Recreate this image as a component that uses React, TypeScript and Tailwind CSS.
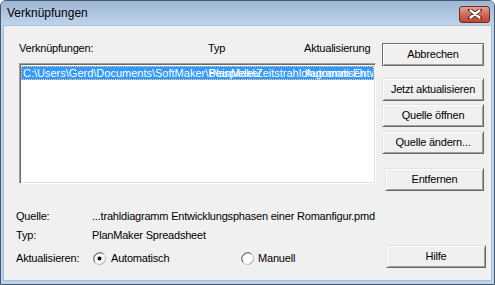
import React from 'react';

const font = { fontFamily: '"Liberation Sans", Arial, sans-serif' };

function WinButton({ label, className = '', isDefault = false }: { label: string; className?: string; isDefault?: boolean }) {
  return (
    <div
      className={`h-[23px] flex items-center justify-center text-[11px] text-black bg-[#f0f0f0] border ${
        isDefault ? 'border-[#6e6e6e]' : 'border-t-[#e3e3e3] border-l-[#e3e3e3] border-r-[#696969] border-b-[#696969]'
      } shadow-[inset_1px_1px_0_#ffffff,inset_-1px_-1px_0_#a0a0a0] ${className}`}
    >
      {label}
    </div>
  );
}

function Radio({ checked }: { checked?: boolean }) {
  return (
    <svg width="13" height="13" viewBox="0 0 13 13" className="shrink-0">
      <circle cx="6.5" cy="6.5" r="6" fill="#ffffff" stroke="#a0a0a0" />
      <path d="M2.3 10.7 A6 6 0 0 1 10.7 2.3" fill="none" stroke="#696969" />
      <path d="M10.7 2.3 A6 6 0 0 1 2.3 10.7" fill="none" stroke="#e3e3e3" />
      {checked && <circle cx="6.5" cy="6.5" r="2" fill="#000000" />}
    </svg>
  );
}

export default function App() {
  return (
    <div style={font} className="w-[495px] h-[285px] flex flex-col bg-[#bcd3ec] border border-[#46586e] rounded-t-[6px] overflow-hidden">
      {/* title bar */}
      <div className="h-[24px] shrink-0 flex items-center justify-between bg-gradient-to-b from-[#9db6d4] to-[#bfd4ec] pl-[6px] pr-[4px]">
        <span className="text-[12px] text-black">Verknüpfungen</span>
        <div className="w-[31px] h-[17px] mt-[2px] rounded-[3px] border border-[#6a2c24] bg-gradient-to-b from-[#e2a493] via-[#cf6a55] to-[#c2452f] flex items-center justify-center">
          <svg width="14" height="10" viewBox="0 0 14 10">
            <path d="M2 1 L12 9 M12 1 L2 9" stroke="#4a1a14" strokeWidth="4" strokeLinecap="round" />
            <path d="M2.5 1.5 L11.5 8.5 M11.5 1.5 L2.5 8.5" stroke="#ffffff" strokeWidth="2.4" strokeLinecap="round" />
          </svg>
        </div>
      </div>

      {/* client area */}
      <div className="flex-1 flex flex-col bg-[#f0f0f0] mx-[2px] mb-[3px] border border-[#a9bfd6] text-[11px] tracking-[-0.2px] text-black">
        {/* top section */}
        <div className="flex">
          <div className="pl-[15px] pt-[15px]">
            <div className="h-[14px] flex items-center">
              <span className="w-[189px]">Verknüpfungen:</span>
              <span className="w-[96px]">Typ</span>
              <span>Aktualisierung</span>
            </div>
            <div className="mt-[8px] w-[357px] h-[121px] bg-white border border-t-[#a0a0a0] border-l-[#a0a0a0] border-r-[#ffffff] border-b-[#ffffff] shadow-[inset_1px_1px_0_#696969,inset_-1px_-1px_0_#e3e3e3] p-[1px] pt-[2px]">
              <div className="relative h-[14px] bg-[#3399ff] text-white tracking-normal overflow-hidden whitespace-nowrap border border-dotted border-[#ffcc77] leading-[12px] pl-[1px]">
                <span>C:\Users\Gerd\Documents\SoftMaker\Beispiele\Zeitstrahldiagramm Entwicklungsphasen</span>
                <span className="absolute left-[187px] top-0">PlanMaker</span>
                <span className="absolute left-[283px] top-0">Automatisch</span>
              </div>
            </div>
          </div>
          <div className="ml-[6px] pt-[17px] flex flex-col items-end w-[102px]">
            <WinButton label="Abbrechen" isDefault className="w-[102px]" />
            <WinButton label="Jetzt aktualisieren" className="w-[102px] mt-[12px]" />
            <WinButton label="Quelle öffnen" className="w-[102px] mt-[3px]" />
            <WinButton label="Quelle ändern..." className="w-[102px] mt-[4px]" />
            <WinButton label="Entfernen" className="w-[99px] mt-[14px]" />
          </div>
        </div>

        {/* bottom section */}
        <div className="mt-[18px] pl-[12px] flex flex-col">
          <div className="h-[14px] flex items-center">
            <span className="w-[76px]">Quelle:</span>
            <span>...trahldiagramm Entwicklungsphasen einer Romanfigur.pmd</span>
          </div>
          <div className="h-[14px] mt-[5px] flex items-center">
            <span className="w-[76px]">Typ:</span>
            <span>PlanMaker Spreadsheet</span>
          </div>
          <div className="mt-[3px] flex items-center">
            <div className="flex items-center mt-[3px]">
              <span className="w-[77px]">Aktualisieren:</span>
              <Radio checked />
              <span className="ml-[5px] w-[130px]">Automatisch</span>
              <Radio />
              <span className="ml-[4px]">Manuell</span>
            </div>
            <WinButton label="Hilfe" className="w-[100px] ml-auto mr-[5px]" />
          </div>
        </div>
      </div>
    </div>
  );
}
